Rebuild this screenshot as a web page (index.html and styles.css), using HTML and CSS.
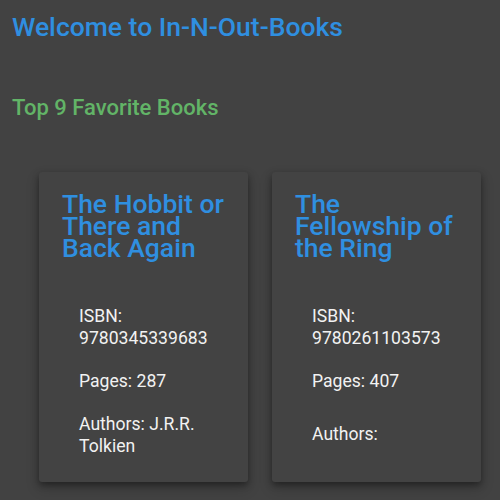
FILE: index.html
```html
<!DOCTYPE html>
<html>
<head>
<meta charset="utf-8">
<link rel="stylesheet" href="styles.css">
</head>
<body>
<h1 class="title">Welcome to In-N-Out-Books</h1>
<h2 class="subtitle">Top 9 Favorite Books</h2>
<div class="grid">
  <div class="card">
    <h3 class="card-title">The Hobbit or There and Back Again</h3>
    <div class="card-body">
      <p class="line">ISBN: 9780345339683</p>
      <p class="line">Pages: 287</p>
      <p class="line">Authors: J.R.R. Tolkien</p>
    </div>
  </div>
  <div class="card">
    <h3 class="card-title">The Fellowship of the Ring</h3>
    <div class="card-body">
      <p class="line">ISBN: 9780261103573</p>
      <p class="line">Pages: 407</p>
      <p class="line line-authors-empty">Authors:</p>
    </div>
  </div>
</div>
</body>
</html>
```
FILE: styles.css
```css
html, body {
  margin: 0;
  background: #424242;
  font-family: Roboto, "Noto Sans", sans-serif;
  height: 100%;
  overflow: hidden;
}
body {
  padding: 0 12px;
}
.title {
  margin: 0;
  padding-top: 11px;
  font-size: 26.5px;
  font-weight: 500;
  line-height: 32px;
  color: #2f8fe0;
}
.subtitle {
  margin: 51px 0 0;
  font-size: 22px;
  font-weight: 500;
  line-height: 28px;
  color: #62b467;
}
.grid {
  display: grid;
  grid-template-columns: 209px 209px;
  gap: 24px;
  margin-top: 50px;
  padding-left: 27px;
}
.card {
  background: #434343;
  height: 310px;
  box-shadow: 0 3px 6px rgba(0,0,0,0.35), 0 6px 14px rgba(0,0,0,0.2);
  border-radius: 3px;
  padding: 21px 23px 0 23px;
  box-sizing: border-box;
}
.card-title {
  margin: 0;
  font-size: 26.5px;
  font-weight: 500;
  line-height: 22px;
  color: #2f8fe0;
}
.card-body {
  padding: 46px 0 0 17px;
}
.line {
  margin: 0 0 21px;
  font-size: 17.6px;
  line-height: 22px;
  color: #f2f2f2;
}
.line-authors-empty {
  margin-top: 31px;
}
```
